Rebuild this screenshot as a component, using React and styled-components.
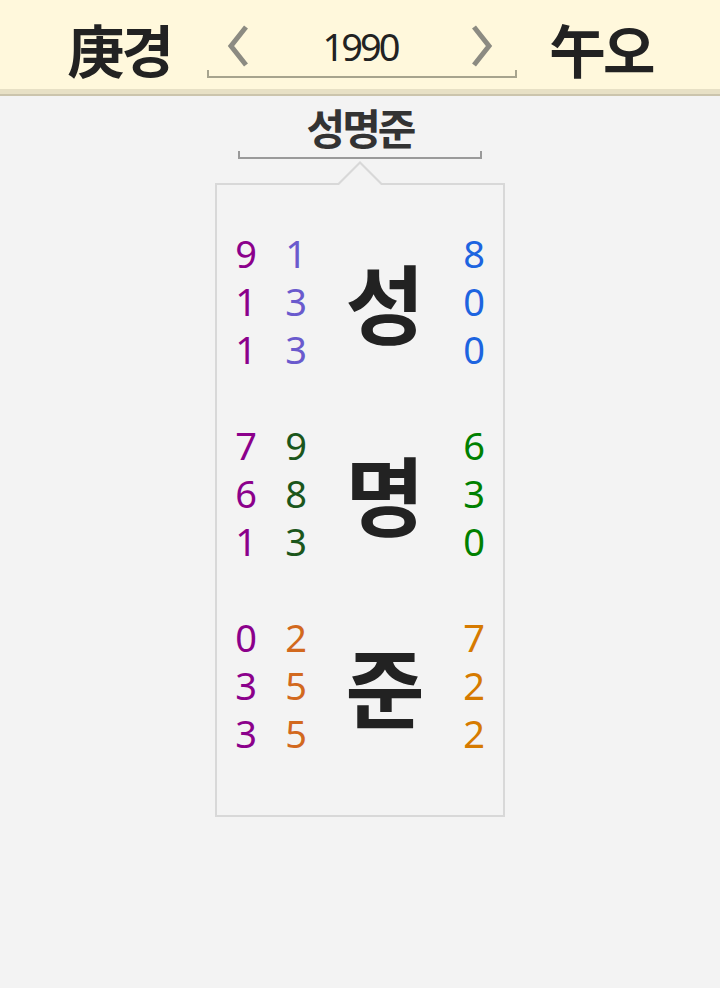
import React from "react";
import styled, { createGlobalStyle } from "styled-components";

const GlobalStyle = createGlobalStyle`
  html, body { margin: 0; padding: 0; background: #f3f3f3; }
  body { font-family: "Noto Sans", "Noto Sans CJK KR", sans-serif; }
`;

const Page = styled.div`
  width: 720px;
  min-height: 988px;
  background: #f3f3f3;
`;

const Header = styled.header`
  height: 89px;
  background: #fff8dc;
  border-bottom: 5px solid #e7e0c5;
  box-shadow: 0 2px 0 #cbc4ac;
  display: flex;
  justify-content: center;
  align-items: center;
  gap: 36px;
`;

const Pillar = styled.div`
  font-family: "Noto Sans CJK KR", "Noto Sans CJK SC", sans-serif;
  font-weight: 700;
  font-size: 57px;
  line-height: 1;
  letter-spacing: -3px;
  color: #222;
  margin-top: 8px;
`;

const YearBox = styled.div`
  width: 306px;
  display: flex;
  flex-direction: column;
  margin-top: 10px;
`;

const YearRow = styled.div`
  height: 48px;
  display: flex;
  align-items: center;
  justify-content: space-between;
  padding: 0 18px;
`;

const Year = styled.span`
  font-family: "Noto Sans", sans-serif;
  font-size: 38px;
  letter-spacing: -3px;
  color: #222;
  line-height: 1;
`;

const Bracket = styled.div`
  width: ${(p) => p.$w}px;
  height: 6px;
  border: 2px solid ${(p) => p.$c};
  border-top: none;
  margin: 0 auto;
`;

const ArrowBtn = styled.svg`
  width: 26px;
  height: 42px;
  display: block;
`;

const Chevron = ({ dir }) => (
  <ArrowBtn viewBox="0 0 26 42">
    <path
      d={dir === "left" ? "M21 2 L6 21 L21 40" : "M5 2 L20 21 L5 40"}
      fill="none"
      stroke="#8c8b82"
      strokeWidth="5"
    />
  </ArrowBtn>
);

const NameBlock = styled.div`
  display: flex;
  flex-direction: column;
  align-items: center;
  padding-top: 9px;
`;

const Name = styled.div`
  font-family: "Noto Sans CJK KR", sans-serif;
  font-weight: 700;
  font-size: 42px;
  letter-spacing: -3px;
  line-height: 48px;
  color: #333;
`;

const Card = styled.div`
  position: relative;
  width: 290px;
  box-sizing: border-box;
  margin: 24px auto 0;
  border: 2px solid #d8d8d8;
  padding: 44px 18px 58px;
  display: flex;
  flex-direction: column;
  gap: 48px;

  &::before,
  &::after {
    content: "";
    position: absolute;
    left: 50%;
    transform: translateX(-50%);
    width: 0;
    height: 0;
    border-left: 23px solid transparent;
    border-right: 23px solid transparent;
  }
  &::before {
    top: -24px;
    border-bottom: 23px solid #d8d8d8;
  }
  &::after {
    top: -21px;
    border-left-width: 21px;
    border-right-width: 21px;
    border-bottom: 21px solid #f3f3f3;
  }
`;

const Group = styled.div`
  display: grid;
  grid-template-columns: 22px 22px 1fr 22px;
  grid-template-rows: repeat(3, 48px);
  column-gap: 28px;
`;

const Column = styled.div`
  grid-column: ${(p) => p.$col};
  grid-row: 1 / span 3;
  display: grid;
  grid-template-rows: repeat(3, 48px);
`;

const Digit = styled.span`
  font-family: "Noto Sans", sans-serif;
  font-size: 38px;
  line-height: 48px;
  text-align: center;
  color: ${(p) => p.$c};
`;

const BigChar = styled.div`
  grid-column: 3;
  grid-row: 1 / span 3;
  align-self: center;
  justify-self: center;
  font-family: "Noto Sans CJK KR", sans-serif;
  font-weight: 700;
  font-size: 86px;
  line-height: 1;
  color: #222;
`;

const groups = [
  { a: [9, 1, 1], b: [1, 3, 3], ch: "성", c: [8, 0, 0], bc: "#6a5acd", cc: "#1d64e0" },
  { a: [7, 6, 1], b: [9, 8, 3], ch: "명", c: [6, 3, 0], bc: "#1b561b", cc: "#008000" },
  { a: [0, 3, 3], b: [2, 5, 5], ch: "준", c: [7, 2, 2], bc: "#d2691e", cc: "#d67a00" },
];

const DigitColumn = ({ col, values, color }) => (
  <Column $col={col}>
    {values.map((v, i) => (
      <Digit key={i} $c={color}>
        {v}
      </Digit>
    ))}
  </Column>
);

export default function App() {
  return (
    <Page>
      <GlobalStyle />
      <Header>
        <Pillar>庚경</Pillar>
        <YearBox>
          <YearRow>
            <Chevron dir="left" />
            <Year>1990</Year>
            <Chevron dir="right" />
          </YearRow>
          <Bracket $w={306} $c="#a7a48e" />
        </YearBox>
        <Pillar>午오</Pillar>
      </Header>
      <NameBlock>
        <Name>성명준</Name>
        <Bracket $w={240} $c="#9a9a9a" />
      </NameBlock>
      <Card>
        {groups.map((g) => (
          <Group key={g.ch}>
            <DigitColumn col={1} values={g.a} color="#8b008b" />
            <DigitColumn col={2} values={g.b} color={g.bc} />
            <BigChar>{g.ch}</BigChar>
            <DigitColumn col={4} values={g.c} color={g.cc} />
          </Group>
        ))}
      </Card>
    </Page>
  );
}
